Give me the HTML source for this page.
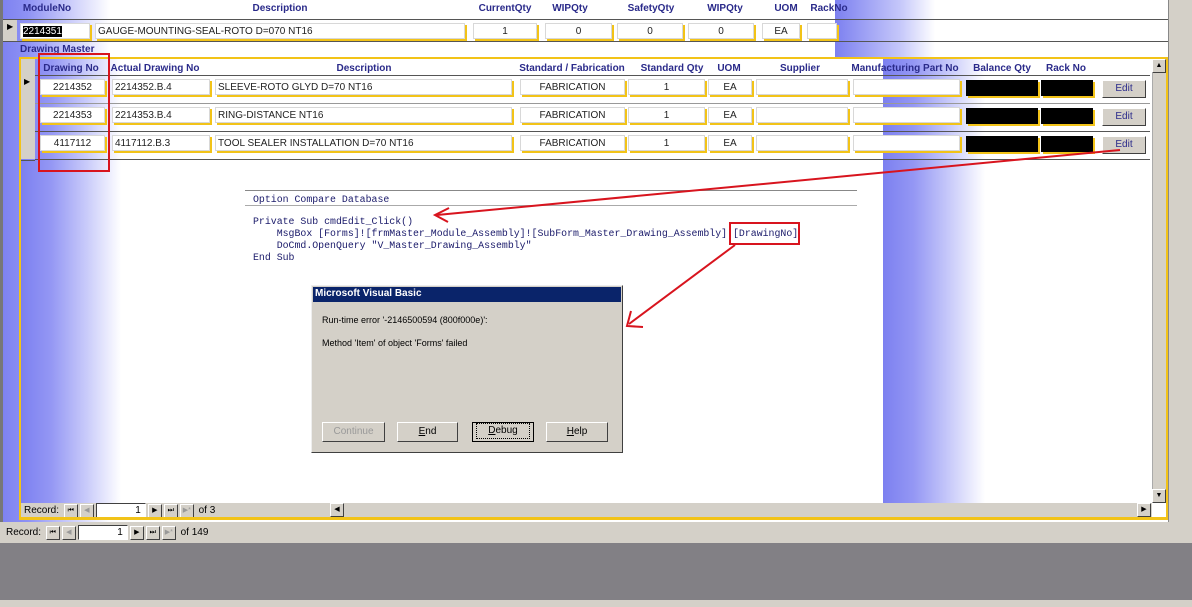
<!DOCTYPE html>
<html><head><meta charset="utf-8"><style>
*{margin:0;padding:0;box-sizing:border-box}
body{width:1192px;height:607px;overflow:hidden;position:relative;background:#fff;font-family:"Liberation Sans",sans-serif;font-size:10px;color:#000}
.a{position:absolute}
.h{position:absolute;color:#2a2a8a;font-weight:bold;font-size:10px;white-space:nowrap;transform:translateX(-50%)}
.f{position:absolute;background:#fff;border:1px solid #d8d8d8;box-shadow:2px 2px 0 #f2c318;height:16px;font-size:10px;line-height:15px;padding-left:2px;white-space:nowrap;overflow:hidden;color:#222}
.c{text-align:center;padding-left:0}
.blk{position:absolute;background:#000;height:16px;box-shadow:2px 2px 0 #f2c318}
.btn{position:absolute;background:#d4d0c8;border:1px solid;border-color:#fff #404040 #404040 #fff;text-align:center;font-size:10px}
.nav{position:absolute;font-size:10px;display:flex;align-items:center;gap:2px}
.nb{width:14px;height:14px;background:#d4d0c8;border:1px solid;border-color:#fff #404040 #404040 #fff;font-size:7px;text-align:center;line-height:12px}
.nbox{height:15px;background:#fff;border:1px solid;border-color:#404040 #fff #fff #404040;text-align:right;padding-right:4px;line-height:13px}
.code{position:absolute;font-family:"Liberation Mono",monospace;font-size:9.9px;color:#1a1a6a;white-space:pre}
</style></head><body>
<div class="a" style="left:0;top:0;width:110px;height:543px;background:linear-gradient(90deg,#7c80f0 0%,#8e92f4 25%,#c5c7fa 60%,#fff 100%)"></div>
<div class="a" style="left:835px;top:0;width:100px;height:58px;background:linear-gradient(90deg,#7c80f0,#c5c7fa 65%,#fff)"></div>
<div class="a" style="left:0;top:0;width:3px;height:543px;background:#777"></div>
<div class="a" style="left:1168px;top:0;width:24px;height:543px;background:#d4d0c8;border-left:1px solid #888"></div>
<div class="h" style="left:47px;top:3px">ModuleNo</div>
<div class="h" style="left:280px;top:3px">Description</div>
<div class="h" style="left:505px;top:3px">CurrentQty</div>
<div class="h" style="left:570px;top:3px">WIPQty</div>
<div class="h" style="left:651px;top:3px">SafetyQty</div>
<div class="h" style="left:725px;top:3px">WIPQty</div>
<div class="h" style="left:786px;top:3px">UOM</div>
<div class="h" style="left:829px;top:3px">RackNo</div>
<div class="a" style="left:3px;top:19px;width:1165px;height:1px;background:#555"></div>
<div class="a" style="left:3px;top:20px;width:14px;height:21px;background:#d4d0c8;font-size:8px;padding:2px 0 0 4px">▶</div>
<div class="f" style="left:20px;top:23px;width:70px"><span style="background:#000;color:#fff">2214351</span></div>
<div class="f" style="left:95px;top:23px;width:370px">GAUGE-MOUNTING-SEAL-ROTO D=070 NT16</div>
<div class="f c" style="left:473px;top:23px;width:64px">1</div>
<div class="f c" style="left:545px;top:23px;width:67px">0</div>
<div class="f c" style="left:617px;top:23px;width:66px">0</div>
<div class="f c" style="left:688px;top:23px;width:66px">0</div>
<div class="f c" style="left:762px;top:23px;width:38px">EA</div>
<div class="f" style="left:807px;top:23px;width:30px"></div>
<div class="a" style="left:3px;top:41px;width:1165px;height:1px;background:#555"></div>
<div class="a" style="left:20px;top:44px;color:#2a2a8a;font-weight:bold;font-size:10px">Drawing Master</div>
<div class="a" style="left:19px;top:57px;width:1149px;height:463px;border:2px solid #f2c318;background:#fff"></div>
<div class="a" style="left:21px;top:59px;width:100px;height:444px;background:linear-gradient(90deg,#7c80f0 0%,#9497f4 30%,#c8cafa 65%,#fff 100%)"></div>
<div class="a" style="left:883px;top:59px;width:102px;height:444px;background:linear-gradient(90deg,#7c80f0 0%,#9497f4 30%,#c8cafa 65%,#fff 100%)"></div>
<div class="a" style="left:21px;top:59px;width:14px;height:100px;background:#d4d0c8"></div>
<div class="a" style="left:21px;top:160px;width:14px;height:1px;background:#555"></div>
<div class="h" style="left:71px;top:63px">Drawing No</div>
<div class="h" style="left:155px;top:63px">Actual Drawing No</div>
<div class="h" style="left:364px;top:63px">Description</div>
<div class="h" style="left:572px;top:63px">Standard / Fabrication</div>
<div class="h" style="left:672px;top:63px">Standard Qty</div>
<div class="h" style="left:729px;top:63px">UOM</div>
<div class="h" style="left:800px;top:63px">Supplier</div>
<div class="h" style="left:905px;top:63px">Manufacturing Part No</div>
<div class="h" style="left:1002px;top:63px">Balance Qty</div>
<div class="h" style="left:1066px;top:63px">Rack No</div>
<div class="a" style="left:35px;top:75px;width:1115px;height:1px;background:#555"></div>
<div class="a" style="left:24px;top:77px;font-size:8px">▶</div>

<div class="f c" style="left:40px;top:79px;width:65px">2214352</div>
<div class="f" style="left:112px;top:79px;width:98px">2214352.B.4</div>
<div class="f" style="left:215px;top:79px;width:297px">SLEEVE-ROTO GLYD D=70 NT16</div>
<div class="f c" style="left:520px;top:79px;width:105px">FABRICATION</div>
<div class="f c" style="left:628px;top:79px;width:77px">1</div>
<div class="f c" style="left:708px;top:79px;width:44px">EA</div>
<div class="f" style="left:756px;top:79px;width:92px"></div>
<div class="f" style="left:853px;top:79px;width:107px"></div>
<div class="blk" style="left:966px;top:80px;width:72px"></div>
<div class="blk" style="left:1041px;top:80px;width:52px"></div>
<div class="btn" style="left:1102px;top:80px;width:44px;height:18px;line-height:16px;color:#2a2a8a">Edit</div>
<div class="a" style="left:35px;top:103px;width:1115px;height:1px;background:#999"></div>

<div class="f c" style="left:40px;top:107px;width:65px">2214353</div>
<div class="f" style="left:112px;top:107px;width:98px">2214353.B.4</div>
<div class="f" style="left:215px;top:107px;width:297px">RING-DISTANCE NT16</div>
<div class="f c" style="left:520px;top:107px;width:105px">FABRICATION</div>
<div class="f c" style="left:628px;top:107px;width:77px">1</div>
<div class="f c" style="left:708px;top:107px;width:44px">EA</div>
<div class="f" style="left:756px;top:107px;width:92px"></div>
<div class="f" style="left:853px;top:107px;width:107px"></div>
<div class="blk" style="left:966px;top:108px;width:72px"></div>
<div class="blk" style="left:1041px;top:108px;width:52px"></div>
<div class="btn" style="left:1102px;top:108px;width:44px;height:18px;line-height:16px;color:#2a2a8a">Edit</div>
<div class="a" style="left:35px;top:131px;width:1115px;height:1px;background:#555"></div>

<div class="f c" style="left:40px;top:135px;width:65px">4117112</div>
<div class="f" style="left:112px;top:135px;width:98px">4117112.B.3</div>
<div class="f" style="left:215px;top:135px;width:297px">TOOL SEALER INSTALLATION D=70 NT16</div>
<div class="f c" style="left:520px;top:135px;width:105px">FABRICATION</div>
<div class="f c" style="left:628px;top:135px;width:77px">1</div>
<div class="f c" style="left:708px;top:135px;width:44px">EA</div>
<div class="f" style="left:756px;top:135px;width:92px"></div>
<div class="f" style="left:853px;top:135px;width:107px"></div>
<div class="blk" style="left:966px;top:136px;width:72px"></div>
<div class="blk" style="left:1041px;top:136px;width:52px"></div>
<div class="btn" style="left:1102px;top:136px;width:44px;height:18px;line-height:16px;color:#2a2a8a">Edit</div>
<div class="a" style="left:35px;top:159px;width:1115px;height:1px;background:#555"></div>
<div class="a" style="left:1152px;top:59px;width:14px;height:444px;background:#d4d0c8;border-left:1px solid #aaa"></div>
<div class="nb a" style="left:1152px;top:59px">▲</div>
<div class="nb a" style="left:1152px;top:489px">▼</div>
<div class="a" style="left:21px;top:503px;width:1131px;height:14px;background:#d4d0c8"></div>
<div class="nav" style="left:24px;top:503px">Record:&nbsp;<span class="nb">⏮</span><span class="nb" style="color:#999">◀</span><span class="nbox" style="width:50px">1</span><span class="nb">▶</span><span class="nb">⏭</span><span class="nb" style="color:#999">▶*</span>&nbsp;of&nbsp;3</div>
<div class="nb a" style="left:330px;top:503px">◀</div>
<div class="nb a" style="left:1137px;top:503px">▶</div>
<div class="a" style="left:21px;top:517px;width:1145px;height:2px;background:#f2c318"></div>
<div class="a" style="left:0;top:522px;width:1192px;height:21px;background:#d4d0c8"></div>
<div class="nav" style="left:6px;top:525px">Record:&nbsp;<span class="nb">⏮</span><span class="nb" style="color:#999">◀</span><span class="nbox" style="width:50px">1</span><span class="nb">▶</span><span class="nb">⏭</span><span class="nb" style="color:#999">▶*</span>&nbsp;of&nbsp;149</div>
<div class="a" style="left:0;top:543px;width:1192px;height:57px;background:#828085"></div>
<div class="a" style="left:0;top:600px;width:1192px;height:7px;background:#d4d0c8"></div>
<div class="a" style="left:245px;top:190px;width:612px;height:1px;background:#888"></div>
<div class="code" style="left:253px;top:194px">Option Compare Database</div>
<div class="a" style="left:245px;top:205px;width:612px;height:1px;background:#aaa"></div>
<div class="code" style="left:253px;top:216px;line-height:12px">Private Sub cmdEdit_Click()
    MsgBox [Forms]![frmMaster_Module_Assembly]![SubForm_Master_Drawing_Assembly]![DrawingNo]
    DoCmd.OpenQuery "V_Master_Drawing_Assembly"
End Sub</div>
<div class="a" style="left:311px;top:285px;width:312px;height:168px;background:#d4d0c8;border:1px solid;border-color:#eee #404040 #404040 #eee"></div>
<div class="a" style="left:313px;top:287px;width:308px;height:15px;background:#0a246a;color:#fff;font-weight:bold;font-size:10px;padding:1px 2px">Microsoft Visual Basic</div>
<div class="a" style="left:322px;top:315px;font-size:9px">Run-time error '-2146500594 (800f000e)':</div>
<div class="a" style="left:322px;top:338px;font-size:9px">Method 'Item' of object 'Forms' failed</div>
<div class="btn" style="left:322px;top:422px;width:63px;height:20px;line-height:18px;color:#999">Continue</div>
<div class="btn" style="left:397px;top:422px;width:61px;height:20px;line-height:18px"><u>E</u>nd</div>
<div class="btn" style="left:472px;top:422px;width:62px;height:20px;line-height:16px;border:1px solid #000"><span style="border:1px dotted #000;display:inline-block;width:54px;line-height:14px"><u>D</u>ebug</span></div>
<div class="btn" style="left:546px;top:422px;width:62px;height:20px;line-height:18px"><u>H</u>elp</div>
<div class="a" style="left:38px;top:53px;width:72px;height:119px;border:2px solid #d8141e"></div>
<div class="a" style="left:729px;top:222px;width:71px;height:23px;border:2px solid #d8141e"></div>
<svg class="a" style="left:0;top:0" width="1192" height="607">
<g stroke="#d8141e" stroke-width="2" fill="none">
<path d="M1120 150 L437 215"/>
<path d="M449 208 L435 215 L448 222"/>
<path d="M735 245 L629 324"/>
<path d="M631 311 L627 326 L643 327"/>
</g></svg>
</body></html>
